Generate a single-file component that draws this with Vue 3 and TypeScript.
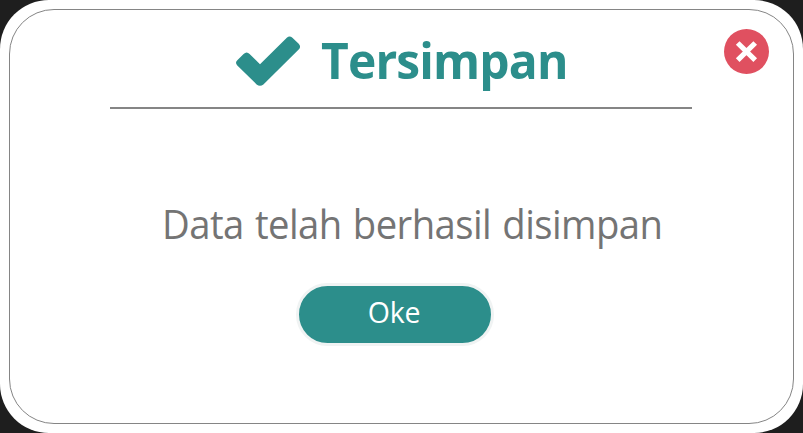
<script setup lang="ts">
import { ref } from 'vue'

const title = ref<string>('Tersimpan')
const message = ref<string>('Data telah berhasil disimpan')
const open = ref<boolean>(true)

function close(): void {
  open.value = false
}
</script>

<template>
  <main class="backdrop">
    <section v-if="open" class="dialog" role="dialog" aria-modal="true">
      <div class="frame">
        <header class="header">
          <svg class="check" viewBox="0 0 64 50" aria-hidden="true">
            <path d="M1.3 24.2 L7.6 17.9 Q10.6 14.9 13.6 17.9 L24 28.3 L50.8 1.7 Q53.6 -0.9 56.4 1.7 L62.7 7.8 Q65.4 10.6 62.7 13.4 L27.4 48.4 Q24 51.2 20.6 48.4 L1.3 29.4 Q-1.3 26.8 1.3 24.2 Z" />
          </svg>
          <h1 class="title">{{ title }}</h1>
          <button class="close" type="button" aria-label="Tutup" @click="close">
            <svg viewBox="0 0 45 45" aria-hidden="true">
              <circle cx="22.5" cy="22.5" r="22.5" />
              <path d="M13.7 14 L31.2 31.2 M31.2 14 L13.7 31.2" />
            </svg>
          </button>
        </header>
        <p class="message">{{ message }}</p>
        <button class="confirm" type="button" @click="close">Oke</button>
      </div>
    </section>
  </main>
</template>

<style>
body {
  background: #1e1e1e;
}
</style>

<style scoped>
.backdrop {
  height: 433px;
  background: #1e1e1e;
  font-family: "Open Sans", "Noto Sans", sans-serif;
}

.dialog {
  box-sizing: border-box;
  height: 433px;
  padding: 9px;
  background: #fff;
  border-radius: 49px;
}

.frame {
  box-sizing: border-box;
  height: 415px;
  border: 1px solid #858585;
  border-radius: 45px;
}

.header {
  position: relative;
  display: flex;
  box-sizing: border-box;
  width: 582px;
  height: 99px;
  margin-left: 100px;
  padding-left: 126px;
  border-bottom: 2px solid #858585;
}

.check {
  width: 64px;
  height: 50px;
  margin-top: 26px;
  fill: #2c8e8b;
}

.title {
  margin: 19px 0 0 21px;
  color: #2c8e8b;
  font-size: 51px;
  font-weight: 700;
  line-height: 60px;
  letter-spacing: -0.9px;
  white-space: nowrap;
  transform: scaleX(0.94);
  transform-origin: left;
}

.close {
  position: absolute;
  top: 19px;
  right: -77px;
  width: 45px;
  height: 45px;
  padding: 0;
  border: 0;
  background: none;
  cursor: pointer;
}

.close svg {
  display: block;
}

.close circle {
  fill: #e05060;
}

.close path {
  fill: none;
  stroke: #fff;
  stroke-width: 5.2;
}

.message {
  margin: 85px 0 0 152px;
  color: #747474;
  font-size: 39.5px;
  font-weight: 400;
  line-height: 60px;
  letter-spacing: -0.6px;
  word-spacing: 2px;
  white-space: nowrap;
  transform: scaleX(0.969);
  transform-origin: left;
}

.confirm {
  display: block;
  box-sizing: border-box;
  width: 198px;
  height: 63px;
  margin: 29px 0 0 286px;
  padding: 0 2px 6px 0;
  border: 3px solid #f0f3f3;
  border-radius: 32px;
  background: #2c8e8b;
  color: #fff;
  font: 400 28.5px/50px "Open Sans", "Noto Sans", sans-serif;
  letter-spacing: -0.2px;
  cursor: pointer;
}
</style>
